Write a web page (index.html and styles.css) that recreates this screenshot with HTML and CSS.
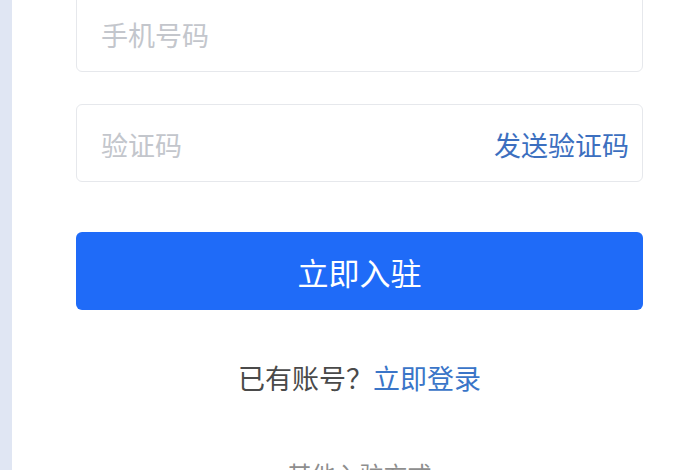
FILE: index.html
```html
<!DOCTYPE html>
<html lang="zh-CN">
<head>
<meta charset="utf-8">
<link rel="stylesheet" href="styles.css">
</head>
<body>
<div class="page">
  <div class="strip"></div>
  <main class="form">
    <div class="field field-first">
      <span class="placeholder">手机号码</span>
    </div>
    <div class="field field-code">
      <span class="placeholder">验证码</span>
      <span class="send">发送验证码</span>
    </div>
    <button class="submit">立即入驻</button>
    <p class="login">已有账号？<span class="link">立即登录</span></p>
    <p class="other">其他入驻方式</p>
  </main>
</div>
</body>
</html>
```
FILE: styles.css
```css
html, body {
  margin: 0;
  padding: 0;
  background: #ffffff;
  height: 100%;
  overflow: hidden;
}
.page {
  display: flex;
  height: 470px;
  font-family: "Noto Sans CJK SC", "Noto Sans", sans-serif;
}
.strip {
  width: 12px;
  flex: none;
  background: #e0e6f3;
}
.form {
  display: flex;
  flex-direction: column;
  margin-left: 64px;
  width: 567px;
}
.form > * {
  flex: none;
}
.field {
  box-sizing: border-box;
  height: 78px;
  border: 1.5px solid #e6e8ec;
  border-radius: 6px;
  display: flex;
  align-items: center;
  justify-content: space-between;
  padding: 2px 13px 0 24px;
}
.field-first {
  margin-top: -6px;
}
.field-code {
  margin-top: 32px;
}
.placeholder {
  font-size: 27px;
  color: #c3c6cc;
}
.send {
  font-size: 27px;
  color: #3c6fbf;
}
.submit {
  margin-top: 50px;
  height: 78px;
  border: none;
  border-radius: 6px;
  background: #1f6bf8;
  color: #ffffff;
  font-family: inherit;
  font-size: 31px;
  padding: 0;
}
.login {
  margin: 50px 0 0;
  text-align: center;
  font-size: 27px;
  line-height: 36px;
  color: #4a4a4a;
}
.link {
  color: #3a75c8;
}
.other {
  margin: 62px 0 0;
  text-align: center;
  font-size: 24px;
  line-height: 32px;
  color: #8e8e8e;
}
```
